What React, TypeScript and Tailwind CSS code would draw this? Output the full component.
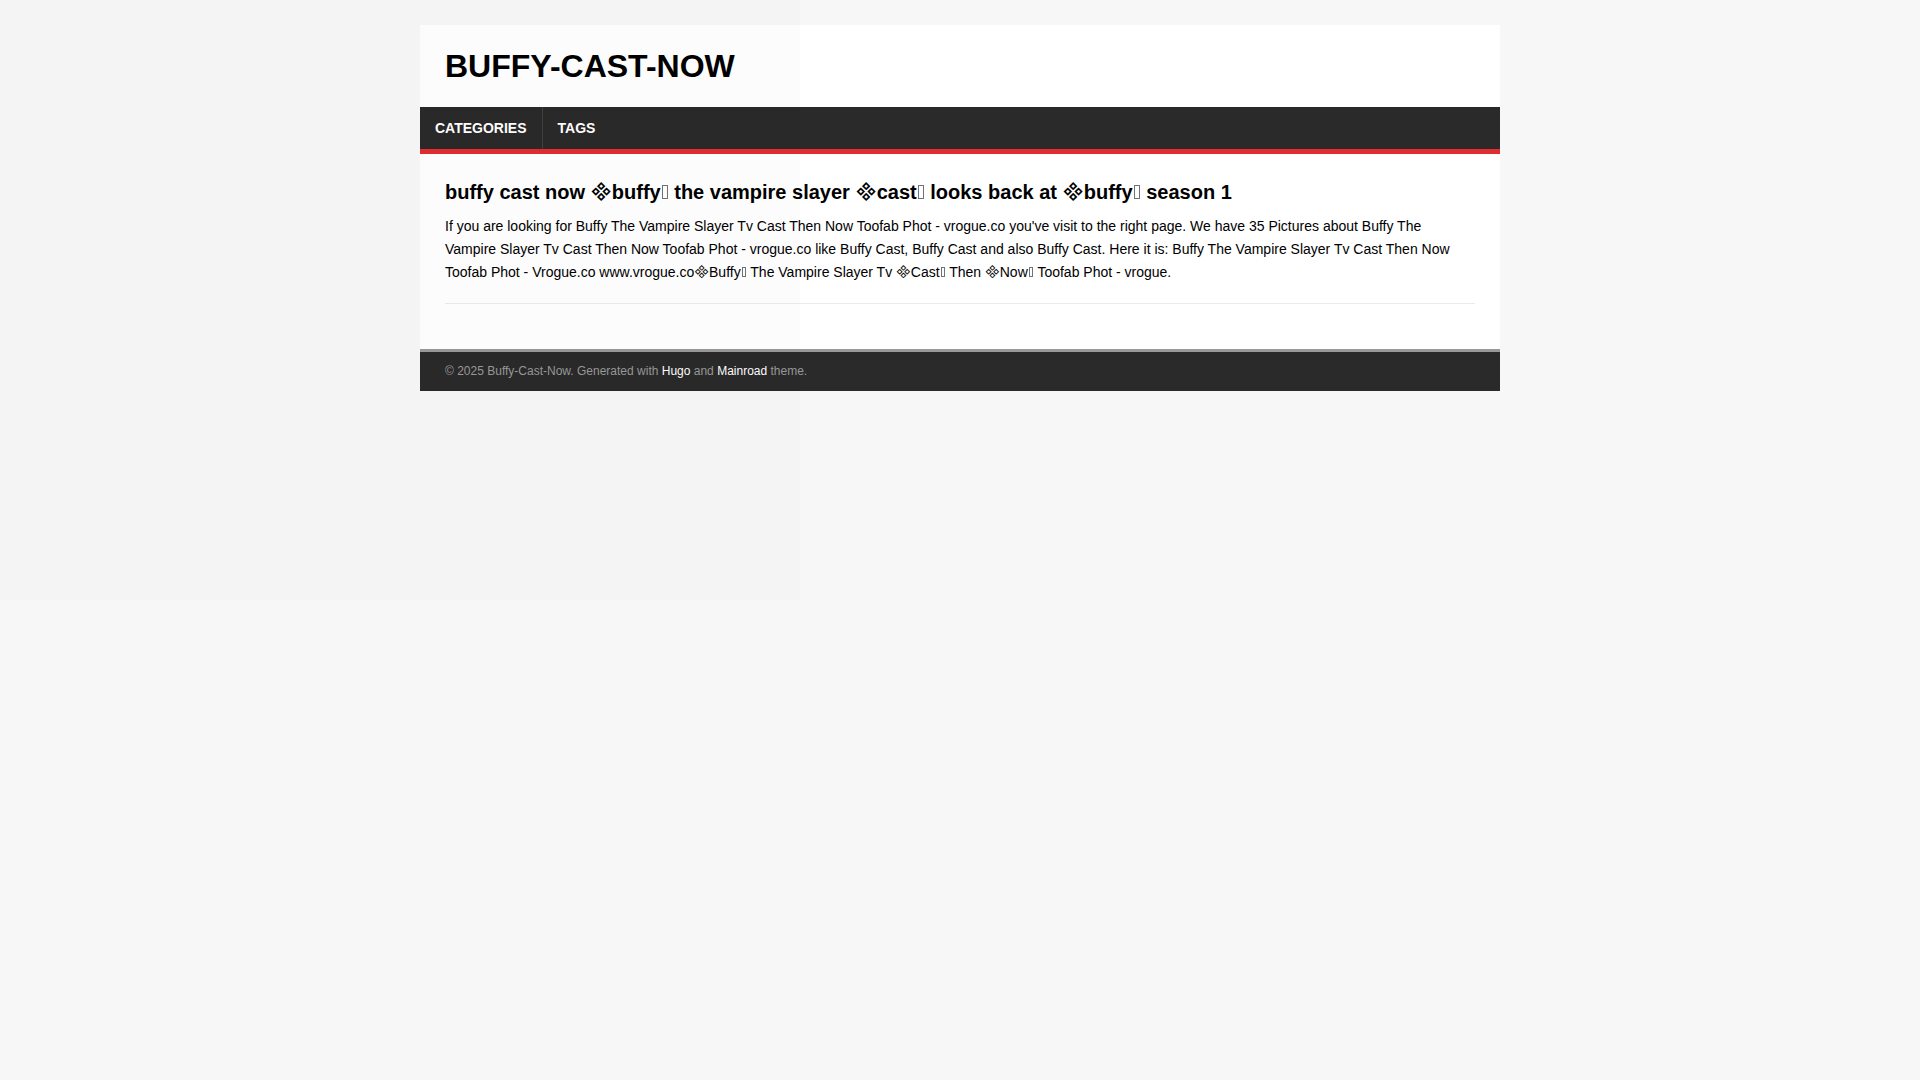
import type { ReactNode } from 'react'

const menu = [
  { label: 'Categories', href: '#categories' },
  { label: 'Tags', href: '#tags' },
]

// search highlight marks left in the scraped text: the opening one has a glyph
// in Inter, the closing one is only an empty box
function Mark({ large, children }: { large?: boolean; children: ReactNode }) {
  return (
    <>
      <span className="font-['Inter',sans-serif] leading-none">{'\uE000'}</span>
      {children}
      <span
        className={`inline-block border border-neutral-500 ${large ? 'mx-px h-[14px] w-[6px]' : 'mx-px h-[10px] w-1'}`}
      />
    </>
  )
}

function Header() {
  return (
    <header>
      <div className="p-[25px]">
        <a href="#home" className="block text-[32px] leading-8 font-bold uppercase text-black">
          Buffy-Cast-Now
        </a>
      </div>
      <nav className="flex bg-[#2a2a2a] border-b-[5px] border-[#e22d30]">
        {menu.map((item, i) => (
          <a
            key={item.label}
            href={item.href}
            className={`px-[15px] py-[10px] text-sm leading-[22px] font-bold uppercase text-white hover:bg-[#e22d30] ${i > 0 ? 'border-l border-[#404040]' : ''}`}
          >
            {item.label}
          </a>
        ))}
      </nav>
    </header>
  )
}

function Footer() {
  return (
    <footer className="bg-[#2a2a2a] border-t-[3px] border-[#999] px-[25px] py-[10px] text-xs leading-[19px] text-[#999]">
      © 2025 Buffy-Cast-Now. Generated with{' '}
      <a href="#hugo" className="text-white hover:underline">Hugo</a> and{' '}
      <a href="#mainroad" className="text-white hover:underline">Mainroad</a> theme.
    </footer>
  )
}

export default function App() {
  return (
    <div className="min-h-screen bg-[#f7f7f7] p-[25px] font-['Liberation_Sans',sans-serif] text-black">
      <div className="mx-auto max-w-[1080px] bg-white">
        <Header />
        <main className="px-[25px] pt-[25px] pb-[45px]">
          <article className="border-b border-[#ebebeb] pb-[19px]">
            <h2 className="mb-[10px] text-xl leading-[26px] font-bold">
              <a href="#post">
                buffy cast now <Mark large>buffy</Mark> the vampire slayer <Mark large>cast</Mark> looks back at{' '}
                <Mark large>buffy</Mark> season 1
              </a>
            </h2>
            <p className="text-sm leading-[23px]">
              If you are looking for Buffy The Vampire Slayer Tv Cast Then Now Toofab Phot - vrogue.co you've visit to
              the right page. We have 35 Pictures about Buffy The Vampire Slayer Tv Cast Then Now Toofab Phot - vrogue.co
              like Buffy Cast, Buffy Cast and also Buffy Cast. Here it is: Buffy The Vampire Slayer Tv Cast Then Now
              Toofab Phot - Vrogue.co www.vrogue.co<Mark>Buffy</Mark> The Vampire Slayer Tv <Mark>Cast</Mark> Then{' '}
              <Mark>Now</Mark> Toofab Phot - vrogue.
            </p>
          </article>
        </main>
        <Footer />
      </div>
      <div className="pointer-events-none absolute top-0 left-0 h-[600px] w-[800px] bg-black/[0.012]" />
    </div>
  )
}
